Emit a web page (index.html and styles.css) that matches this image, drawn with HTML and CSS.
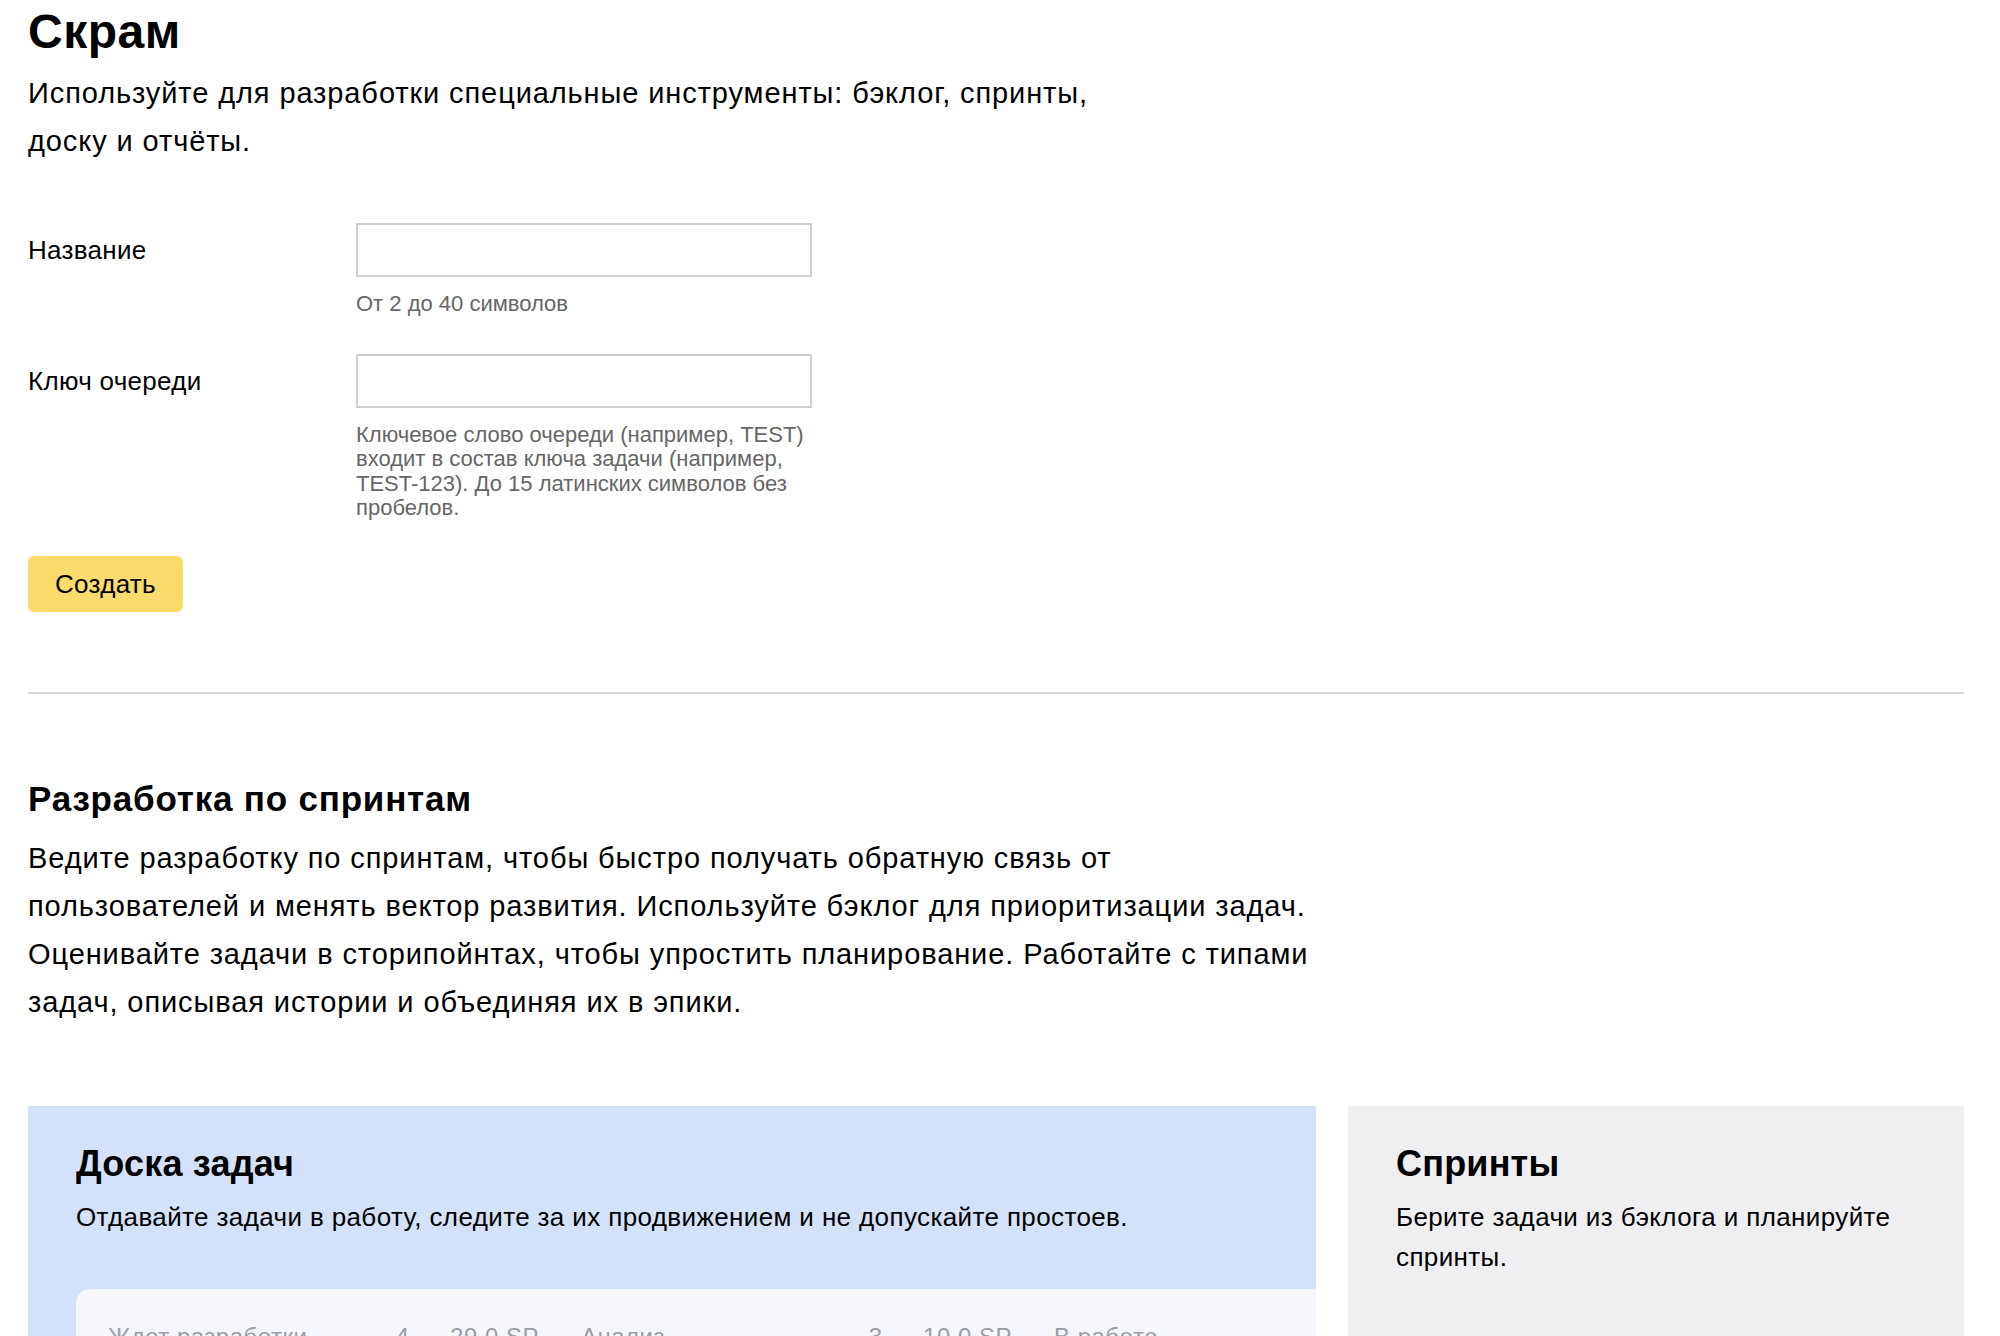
FILE: index.html
```html
<!DOCTYPE html>
<html lang="ru">
<head>
<meta charset="utf-8">
<title>Скрам</title>
<link rel="stylesheet" href="styles.css">
</head>
<body>
<main class="page">
  <h1 class="title">Скрам</h1>
  <p class="lead">Используйте для разработки специальные инструменты: бэклог, спринты,<br>доску и отчёты.</p>

  <form class="form">
    <div class="row">
      <label class="label" for="name">Название</label>
      <div class="field">
        <input class="input" id="name" type="text">
        <div class="hint">От 2 до 40 символов</div>
      </div>
    </div>
    <div class="row row-second">
      <label class="label" for="key">Ключ очереди</label>
      <div class="field">
        <input class="input" id="key" type="text">
        <div class="hint">Ключевое слово очереди (например, TEST) входит в состав ключа задачи (например, TEST-123). До 15 латинских символов без пробелов.</div>
      </div>
    </div>
    <button class="btn" type="button">Создать</button>
  </form>

  <hr class="divider">

  <section class="section">
    <h2 class="section-title">Разработка по спринтам</h2>
    <p class="section-text">Ведите разработку по спринтам, чтобы быстро получать обратную связь от<br>пользователей и менять вектор развития. Используйте бэклог для приоритизации задач.<br>Оценивайте задачи в сторипойнтах, чтобы упростить планирование. Работайте с типами<br>задач, описывая истории и объединяя их в эпики.</p>

    <div class="cards">
      <div class="card card-blue">
        <h3 class="card-title">Доска задач</h3>
        <p class="card-text">Отдавайте задачи в работу, следите за их продвижением и не допускайте простоев.</p>
        <div class="board">
          <div class="board-cols">
            <div class="board-col">
              <span class="board-name">Ждет разработки</span>
              <span class="board-meta"><span>4</span><span>·</span><span>29.0 SP</span></span>
            </div>
            <div class="board-col">
              <span class="board-name">Анализ</span>
              <span class="board-meta"><span>3</span><span>·</span><span>10.0 SP</span></span>
            </div>
            <div class="board-col">
              <span class="board-name">В работе</span>
            </div>
          </div>
        </div>
      </div>
      <div class="card card-gray">
        <h3 class="card-title">Спринты</h3>
        <p class="card-text">Берите задачи из бэклога и планируйте спринты.</p>
      </div>
    </div>
  </section>
</main>
</body>
</html>
```

FILE: styles.css
```css
* { box-sizing: border-box; }

html, body {
  margin: 0;
  background: #fff;
}

body {
  font-family: "Liberation Sans", Arial, sans-serif;
  color: #000;
}

.page {
  padding: 4px 36px 0 28px;
}

.title {
  margin: 0;
  font-size: 48px;
  line-height: 56px;
  font-weight: 700;
  letter-spacing: 0.5px;
}

.lead {
  margin: 9px 0 0;
  font-size: 29px;
  line-height: 48px;
  letter-spacing: 0.9px;
}

.form {
  margin-top: 58px;
}

.row {
  display: grid;
  grid-template-columns: 328px 456px;
}

.row-second {
  margin-top: 38px;
}

.label {
  font-size: 26px;
  line-height: 54px;
  letter-spacing: 0.3px;
}

.field {
  display: flex;
  flex-direction: column;
}

.input {
  width: 456px;
  height: 54px;
  margin: 0;
  border: 2px solid #cfcfcf;
  border-radius: 0;
  background: #fff;
  font: inherit;
  font-size: 26px;
  padding: 0 12px;
  outline: none;
}

.hint {
  margin-top: 15px;
  font-size: 22px;
  line-height: 24.2px;
  color: #666;
}

.btn {
  display: block;
  margin-top: 36px;
  height: 56px;
  padding: 0 27px;
  border: 0;
  border-radius: 6px;
  background: #f9dc6b;
  font-family: inherit;
  font-size: 26px;
  letter-spacing: 0.3px;
  color: #000;
}

.divider {
  margin: 80px 0 0;
  border: 0;
  height: 2px;
  background: #d6d6d6;
}

.section-title {
  margin: 84.5px 0 0;
  font-size: 35px;
  line-height: 40px;
  font-weight: 700;
  letter-spacing: 0.8px;
}

.section-text {
  margin: 15.5px 0 0;
  font-size: 29px;
  line-height: 48px;
  letter-spacing: 0.9px;
}

.cards {
  margin-top: 80px;
  display: grid;
  grid-template-columns: 1288px 1fr;
  column-gap: 32px;
}

.card {
  padding: 36px 48px 0;
  overflow: hidden;
  min-height: 260px;
}

.card-blue {
  background: #d3e1fa;
}

.card-gray {
  background: #efeff1;
}

.card-title {
  margin: 0;
  font-size: 36px;
  line-height: 44px;
  font-weight: 700;
  letter-spacing: 0.2px;
}

.card-text {
  margin: 11px 0 0;
  font-size: 26px;
  line-height: 40px;
  letter-spacing: 0.38px;
}

.board {
  margin-top: 52px;
  margin-right: -400px;
  height: 200px;
  background: #f5f7fc;
  border-radius: 14px 0 0 0;
  padding: 34px 32px 0;
}

.board-cols {
  display: flex;
  gap: 42px;
  font-size: 24px;
  line-height: 28px;
  letter-spacing: 0.5px;
  color: #9a9ea6;
}

.board-col {
  flex: 0 0 431px;
  display: flex;
  justify-content: space-between;
}

.board-meta {
  display: flex;
  gap: 16px;
}
```
